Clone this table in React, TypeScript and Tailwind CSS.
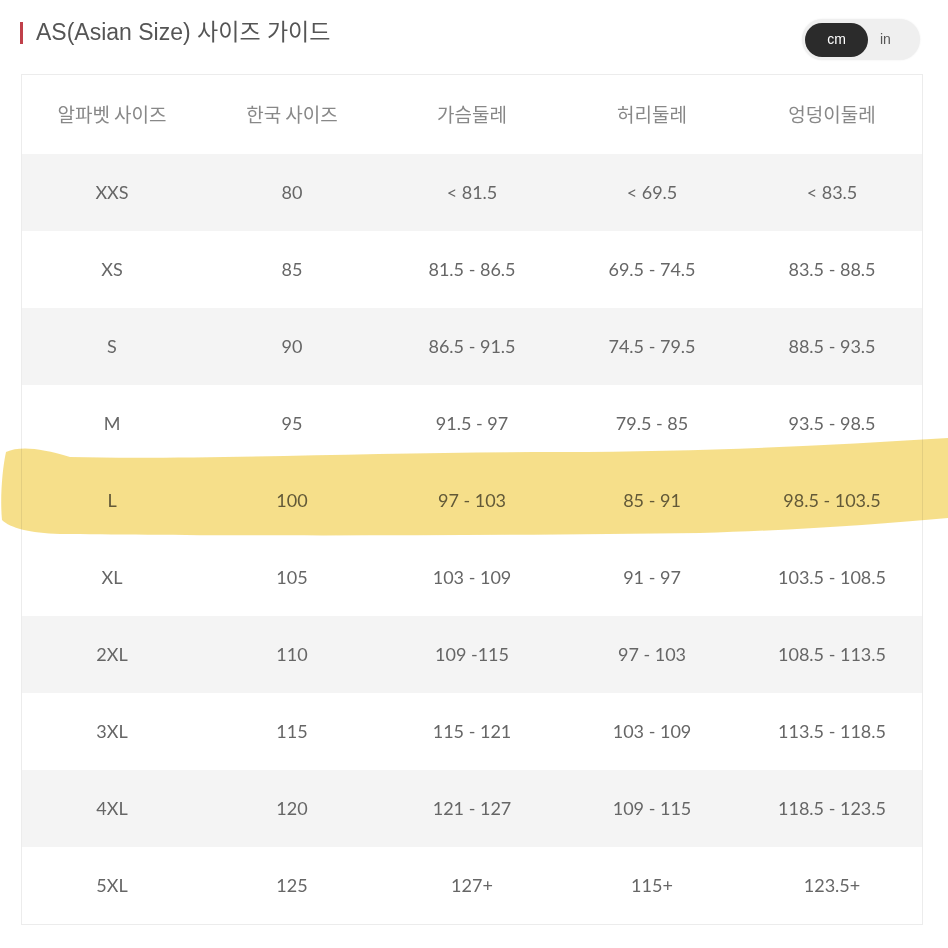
const rows = [
  ["XXS", "80", "< 81.5", "< 69.5", "< 83.5"],
  ["XS", "85", "81.5 - 86.5", "69.5 - 74.5", "83.5 - 88.5"],
  ["S", "90", "86.5 - 91.5", "74.5 - 79.5", "88.5 - 93.5"],
  ["M", "95", "91.5 - 97", "79.5 - 85", "93.5 - 98.5"],
  ["L", "100", "97 - 103", "85 - 91", "98.5 - 103.5"],
  ["XL", "105", "103 - 109", "91 - 97", "103.5 - 108.5"],
  ["2XL", "110", "109 -115", "97 - 103", "108.5 - 113.5"],
  ["3XL", "115", "115 - 121", "103 - 109", "113.5 - 118.5"],
  ["4XL", "120", "121 - 127", "109 - 115", "118.5 - 123.5"],
  ["5XL", "125", "127+", "115+", "123.5+"],
];

const headers = ["알파벳 사이즈", "한국 사이즈", "가슴둘레", "허리둘레", "엉덩이둘레"];

export default function App() {
  return (
    <div className="relative w-[948px] h-[948px] bg-white overflow-hidden font-['Lato','Noto_Sans_CJK_KR',sans-serif]">
      <div className="flex justify-between pl-[20px] pr-[28px] pt-[19px] h-[74px] items-start">
        <div className="flex items-center gap-[13px] mt-[2px]">
          <span className="w-[3px] h-[22px] bg-[#c0404a]" />
          <span className="text-[23px] text-[#555] font-['Liberation_Sans','Noto_Sans_CJK_KR',sans-serif] leading-none">
            AS(Asian Size) 사이즈 가이드
          </span>
        </div>
        <div className="flex items-center w-[118px] h-[41px] rounded-full bg-[#efefef] p-[3px] shadow-[0_0_2px_rgba(0,0,0,0.08)]">
          <div className="flex items-center justify-center w-[63px] h-[34px] rounded-full bg-[#2b2b2b] text-white text-[14px] font-['Liberation_Sans',sans-serif]">
            cm
          </div>
          <div className="ml-[12px] text-[14px] text-[#555] font-['Liberation_Sans',sans-serif]">in</div>
        </div>
      </div>

      <div className="ml-[21px] w-[902px] border border-[#ececec]">
        <div className="grid grid-cols-5 h-[79px] items-center bg-white">
          {headers.map((h) => (
            <div key={h} className="text-center text-[19px] text-[#888] font-['Noto_Sans_CJK_KR',sans-serif]">
              {h}
            </div>
          ))}
        </div>
        {rows.map((r, i) => (
          <div
            key={r[0]}
            className={`grid grid-cols-5 h-[77px] items-center ${i % 2 === 0 && i !== 4 ? "bg-[#f4f4f4]" : "bg-white"}`}
          >
            {r.map((c, j) => (
              <div key={j} className="text-center text-[18px] text-[#666]">
                {c}
              </div>
            ))}
          </div>
        ))}
      </div>

      <svg
        className="absolute left-0 top-[436px] mix-blend-multiply pointer-events-none"
        width="948"
        height="104"
        viewBox="0 436 948 104"
      >
        <path
          d="M6 452 C 20 446, 40 448, 70 457 C 200 460, 380 452, 560 452 C 700 452, 820 446, 948 438 L 948 518 C 880 524, 800 530, 700 533 C 500 536, 200 536, 60 534 C 30 533, 10 528, 2 520 C 0 500, 2 470, 6 452 Z"
          fill="#f6dd84"
          opacity="0.95"
        />
      </svg>
    </div>
  );
}
